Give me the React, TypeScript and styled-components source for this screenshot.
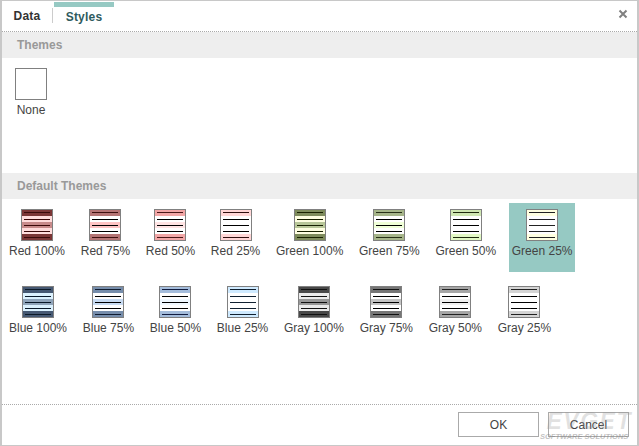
import React from "react";
import styled, { createGlobalStyle } from "styled-components";

type Palette = {
  edge: string;
  mid: string;
  row: string;
  foot?: string;
  line: string;
  edgeLine: string;
};

type Theme = Palette & { name: string };

const GlobalStyle = createGlobalStyle`
  html, body {
    margin: 0;
    padding: 0;
    height: 100%;
    background: #fff;
  }
  #root {
    height: 100%;
  }
`;

const Dialog = styled.div`
  box-sizing: border-box;
  width: 639px;
  height: 446px;
  display: flex;
  flex-direction: column;
  border: 1px solid #c8c8c8;
  border-left-width: 2px;
  border-right-width: 2px;
  background: #fff;
  font-family: "Liberation Sans", Arial, sans-serif;
  font-size: 12px;
  color: #444;
  position: relative;
  overflow: hidden;
`;

const TabBar = styled.div`
  height: 30px;
  flex: none;
  display: flex;
  align-items: flex-start;
  border-bottom: 1px dotted #aaa;
  position: relative;
`;

const Tab = styled.div<{ $active?: boolean }>`
  box-sizing: border-box;
  height: 26px;
  padding-top: ${({ $active }) => ($active ? "3px" : "8px")};
  border-top: ${({ $active }) => ($active ? "5px solid #96c9c3" : "none")};
  margin-top: ${({ $active }) => ($active ? "1px" : "0")};
  margin-left: ${({ $active }) => ($active ? "1px" : "0")};
  width: ${({ $active }) => ($active ? "60px" : "50px")};
  text-align: center;
  font-weight: bold;
  line-height: 15px;
  letter-spacing: 0.2px;
  color: ${({ $active }) => ($active ? "#2f5b5e" : "#333")};
`;

const TabDivider = styled.div`
  width: 1px;
  height: 15px;
  margin-top: 7px;
  background: #ccc;
  flex: none;
`;

const CloseButton = styled.div`
  position: absolute;
  top: 8px;
  right: 9px;
  width: 10px;
  height: 10px;
  color: #808080;
  display: flex;
`;

const Content = styled.div`
  flex: 1;
  display: flex;
  flex-direction: column;
  min-height: 0;
`;

const SectionHeader = styled.div`
  box-sizing: border-box;
  height: 26px;
  flex: none;
  padding: 1px 0 0 15px;
  line-height: 25px;
  background: #eee;
  color: #999;
  font-weight: bold;
`;

const NoneArea = styled.div`
  height: 115px;
  flex: none;
  box-sizing: border-box;
  padding: 10px 0 0 13px;
`;

const NoneItem = styled.div`
  width: 32px;
  display: flex;
  flex-direction: column;
  align-items: center;
`;

const EmptySwatch = styled.div`
  box-sizing: border-box;
  width: 32px;
  height: 32px;
  border: 1px solid #808080;
  flex: none;
`;

const Grid = styled.div`
  display: flex;
  flex-wrap: wrap;
  align-content: flex-start;
`;

const ThemeCell = styled.div<{ $selected?: boolean }>`
  box-sizing: border-box;
  height: 69px;
  margin: 4px 5.7px 4px 4px;
  padding: 6px 3px 0;
  display: flex;
  flex-direction: column;
  align-items: center;
  background: ${({ $selected }) => ($selected ? "#96c9c3" : "transparent")};
`;

const SwatchLabel = styled.div`
  margin-top: 3px;
  line-height: 15px;
  white-space: nowrap;
`;

const Footer = styled.div`
  height: 41px;
  flex: none;
  box-sizing: border-box;
  border-top: 1px dotted #aaa;
  display: flex;
  justify-content: flex-end;
  gap: 9px;
  padding: 7px 8px 0 0;
`;

const DialogButton = styled.button`
  box-sizing: border-box;
  width: 81px;
  height: 25px;
  padding: 0;
  border: 1px solid #aaa;
  background: #fff;
  color: #444;
  font-family: inherit;
  font-size: 12px;
`;

const Watermark = styled.div`
  position: absolute;
  right: 5px;
  bottom: 4px;
  width: 92px;
  font-family: "Liberation Sans", Arial, sans-serif;
  font-style: italic;
  font-weight: bold;
  text-align: right;
  pointer-events: none;
`;

const WatermarkBig = styled.div`
  font-size: 23px;
  line-height: 20px;
  letter-spacing: 1.5px;
  color: rgba(150, 150, 150, 0.28);
`;

const WatermarkSmall = styled.div`
  font-size: 7.5px;
  line-height: 8px;
  margin-top: 2px;
  padding-right: 12px;
  white-space: nowrap;
  color: rgba(130, 130, 130, 0.5);
`;

const firstRow: Theme[] = [
  { name: "Red 100%", edge: "#7b3535", mid: "#c88a8a", row: "#ffdcdc", line: "#3a0808", edgeLine: "#3a0a0a" },
  { name: "Red 75%", edge: "#b57474", mid: "#ffc4c4", row: "#ffffff", line: "#000", edgeLine: "#3e1010" },
  { name: "Red 50%", edge: "#f2a6a6", mid: "#ffe4e4", row: "#ffffff", line: "#000", edgeLine: "#4a1818" },
  { name: "Red 25%", edge: "#ffd6d6", mid: "#ffffff", row: "#ffffff", line: "#000", edgeLine: "#301010" },
  { name: "Green 100%", edge: "#7f8c5c", mid: "#b9c799", row: "#ffffe2", line: "#182000", edgeLine: "#1a2200" },
  { name: "Green 75%", edge: "#a6b58a", mid: "#f0ffd8", row: "#ffffff", line: "#000", edgeLine: "#283018" },
  { name: "Green 50%", edge: "#cfe6b2", foot: "#e2f8c4", mid: "#ffffff", row: "#ffffff", line: "#000", edgeLine: "#202a10" },
  { name: "Green 25%", edge: "#ffffe0", mid: "#ffffff", row: "#ffffff", line: "#222", edgeLine: "#222" },
];

const secondRow: Theme[] = [
  { name: "Blue 100%", edge: "#465973", mid: "#90a5bb", row: "#dcf2ff", line: "#0a1a2a", edgeLine: "#0c1a28" },
  { name: "Blue 75%", edge: "#768dab", mid: "#c8dbf2", row: "#ffffff", line: "#000", edgeLine: "#101c30" },
  { name: "Blue 50%", edge: "#a4bcdb", mid: "#f0f8ff", row: "#ffffff", line: "#000", edgeLine: "#101c40" },
  { name: "Blue 25%", edge: "#cfeaff", mid: "#ffffff", row: "#ffffff", line: "#102030", edgeLine: "#102030" },
  { name: "Gray 100%", edge: "#484848", mid: "#979797", row: "#eaeaea", line: "#111", edgeLine: "#111" },
  { name: "Gray 75%", edge: "#767676", mid: "#c4c4c4", row: "#ffffff", line: "#000", edgeLine: "#111" },
  { name: "Gray 50%", edge: "#a6a6a6", mid: "#f0f0f0", row: "#ffffff", line: "#000", edgeLine: "#222" },
  { name: "Gray 25%", edge: "#d4d4d4", mid: "#ffffff", row: "#ffffff", line: "#000", edgeLine: "#222" },
];

const Swatch = ({ edge, mid, row, foot, line, edgeLine }: Palette) => (
  <svg width="32" height="32" viewBox="0 0 32 32" style={{ flex: "none", display: "block" }}>
    <rect x="0" y="0" width="32" height="32" fill="#808080" />
    <rect x="1" y="1" width="30" height="6" fill={edge} />
    <rect x="1" y="7" width="30" height="6" fill={row} />
    <rect x="1" y="13" width="30" height="6" fill={mid} />
    <rect x="1" y="19" width="30" height="6" fill={row} />
    <rect x="1" y="25" width="30" height="6" fill={foot || edge} />
    <rect x="3" y="3" width="26" height="1" fill={edgeLine} />
    <rect x="3" y="10" width="26" height="1" fill={line} />
    <rect x="3" y="16" width="26" height="1" fill={line} />
    <rect x="3" y="22" width="26" height="1" fill={line} />
    <rect x="3" y="28" width="26" height="1" fill={edgeLine} />
  </svg>
);

const App = () => {
  const themes = [...firstRow, ...secondRow];

  return (
    <>
      <GlobalStyle />
      <Dialog>
        <TabBar>
          <Tab>Data</Tab>
          <TabDivider />
          <Tab $active>Styles</Tab>
          <CloseButton>
            <svg width="10" height="10" viewBox="0 0 10 10">
              <path d="M1.5 1.5 L8.5 8.5 M8.5 1.5 L1.5 8.5" stroke="currentColor" strokeWidth="2" fill="none" />
            </svg>
          </CloseButton>
        </TabBar>

        <Content>
          <SectionHeader>Themes</SectionHeader>
          <NoneArea>
            <NoneItem>
              <EmptySwatch />
              <SwatchLabel>None</SwatchLabel>
            </NoneItem>
          </NoneArea>

          <SectionHeader>Default Themes</SectionHeader>
          <Grid>
            {themes.map((theme) => (
              <ThemeCell key={theme.name} $selected={theme.name === "Green 25%"}>
                <Swatch {...theme} />
                <SwatchLabel>{theme.name}</SwatchLabel>
              </ThemeCell>
            ))}
          </Grid>
        </Content>

        <Footer>
          <DialogButton>OK</DialogButton>
          <DialogButton>Cancel</DialogButton>
        </Footer>

        <Watermark>
          <WatermarkBig>EVGET</WatermarkBig>
          <WatermarkSmall>SOFTWARE SOLUTIONS</WatermarkSmall>
        </Watermark>
      </Dialog>
    </>
  );
};

export default App;
